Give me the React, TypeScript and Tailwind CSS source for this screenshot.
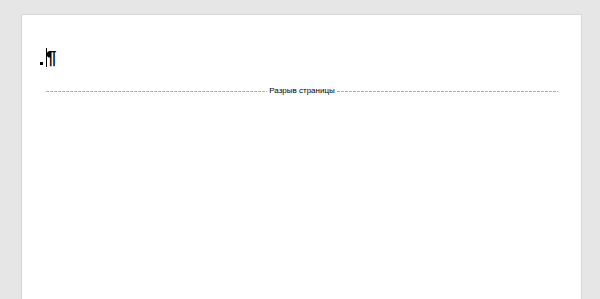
export default function App() {
  return (
    <div className="w-[600px] h-[299px] bg-[#e6e6e6] overflow-hidden pt-[14px] pl-[21px]" style={{ fontFamily: '"Liberation Sans", Arial, sans-serif' }}>
      <div className="w-[561px] h-[300px] bg-white border-l border-t border-r border-[#d6d6d6] relative">
        <div className="flex items-end h-[52px] pl-[18px]">
          <div className="w-[3px] h-[3px] bg-black mb-[2px] mr-[3px]" />
          <div className="relative flex items-end">
            <div className="w-[1px] h-[19px] bg-black mb-[0px]" />
            <span className="text-[19px] leading-[18px] text-black font-bold ml-[-1px]">¶</span>
          </div>
        </div>
        <div className="flex items-center pl-[24px] pr-[23px] mt-[19px]">
          <div className="flex-1 h-[1px] bg-[repeating-linear-gradient(to_right,#b0b0b0_0,#b0b0b0_3px,transparent_3px,transparent_4px)]" />
          <span className="px-[2px] text-[8px] leading-[10px] text-black">Разрыв страницы</span>
          <div className="flex-1 h-[1px] bg-[repeating-linear-gradient(to_right,#b0b0b0_0,#b0b0b0_3px,transparent_3px,transparent_4px)]" />
        </div>
      </div>
    </div>
  );
}
